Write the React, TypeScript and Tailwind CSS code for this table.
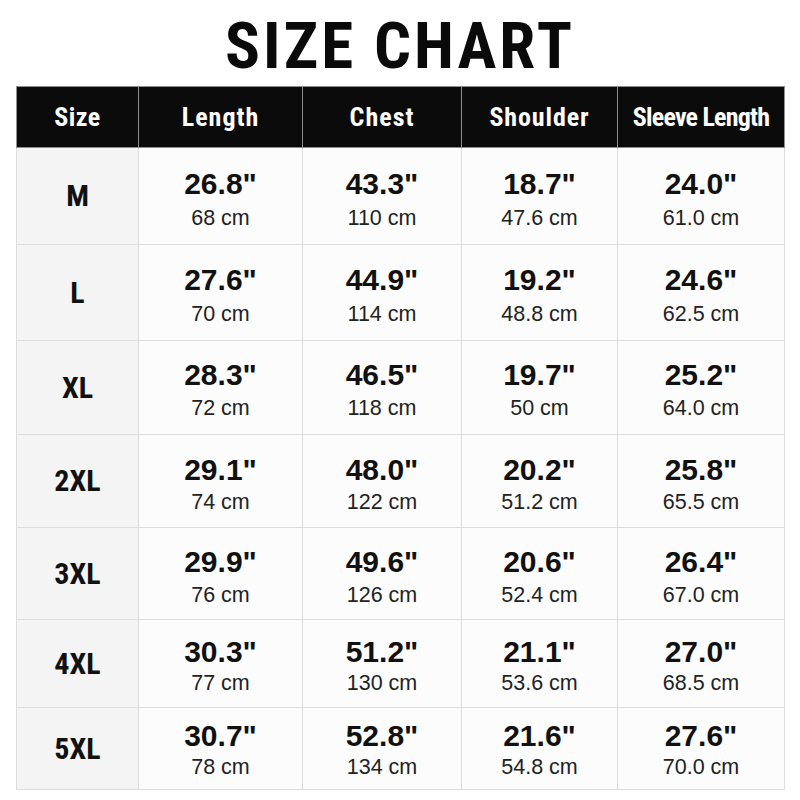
const headers: [string, string][] = [
  ["Size", "tracking-[0.5px]"],
  ["Length", "tracking-[1px]"],
  ["Chest", "tracking-[1px]"],
  ["Shoulder", "tracking-[0.9px]"],
  ["Sleeve Length", "tracking-[-0.8px]"],
];

type Row = {
  size: string;
  h: string;
  pt: string;
  mt: string;
  vals: [string, string][];
};

const rows: Row[] = [
  { size: "M", h: "h-[97px]", pt: "pt-[20px]", mt: "mt-[5px]", vals: [["26.8\"", "68 cm"], ["43.3\"", "110 cm"], ["18.7\"", "47.6 cm"], ["24.0\"", "61.0 cm"]] },
  { size: "L", h: "h-[96px]", pt: "pt-[19px]", mt: "mt-[5px]", vals: [["27.6\"", "70 cm"], ["44.9\"", "114 cm"], ["19.2\"", "48.8 cm"], ["24.6\"", "62.5 cm"]] },
  { size: "XL", h: "h-[94px]", pt: "pt-[18px]", mt: "mt-[4px]", vals: [["28.3\"", "72 cm"], ["46.5\"", "118 cm"], ["19.7\"", "50 cm"], ["25.2\"", "64.0 cm"]] },
  { size: "2XL", h: "h-[93px]", pt: "pt-[19px]", mt: "mt-[3px]", vals: [["29.1\"", "74 cm"], ["48.0\"", "122 cm"], ["20.2\"", "51.2 cm"], ["25.8\"", "65.5 cm"]] },
  { size: "3XL", h: "h-[92px]", pt: "pt-[18px]", mt: "mt-[4px]", vals: [["29.9\"", "76 cm"], ["49.6\"", "126 cm"], ["20.6\"", "52.4 cm"], ["26.4\"", "67.0 cm"]] },
  { size: "4XL", h: "h-[88px]", pt: "pt-[16px]", mt: "mt-[2px]", vals: [["30.3\"", "77 cm"], ["51.2\"", "130 cm"], ["21.1\"", "53.6 cm"], ["27.0\"", "68.5 cm"]] },
  { size: "5XL", h: "h-[82px]", pt: "pt-[12px]", mt: "mt-[2px]", vals: [["30.7\"", "78 cm"], ["52.8\"", "134 cm"], ["21.6\"", "54.8 cm"], ["27.6\"", "70.0 cm"]] },
];

const cond = "font-['Roboto_Condensed',Roboto,'Liberation_Sans',sans-serif]";
const sans = "font-['Liberation_Sans',Arial,sans-serif]";
const grid = "grid grid-cols-[122px_164px_159px_156px_167px]";

export default function App() {
  return (
    <div className="w-[800px] h-[800px] bg-white overflow-hidden">
      <div className="h-[86px] flex items-center justify-center pt-[6px]">
        <h1 className={`${cond} text-[65px] leading-none font-bold tracking-[3px] text-[#0a0a0a]`}>
          SIZE CHART
        </h1>
      </div>
      <div className="ml-[16px] w-[769px] flex flex-col">
        <div className={`${grid} h-[62px] bg-[#0b0b0b] border-l border-t border-[#8e8e8e]`}>
          {headers.map(([t, tr]) => (
            <div
              key={t}
              className={`${cond} ${tr} flex items-center justify-center border-r border-b border-[#8e8e8e] text-white text-[26px] font-bold leading-none`}
            >
              {t}
            </div>
          ))}
        </div>
        {rows.map((r) => (
          <div key={r.size} className={`${grid} ${r.h} border-l border-[#dcdcdc]`}>
            <div
              className={`${cond} flex items-center justify-center bg-[#f4f4f4] border-r border-b border-[#dcdcdc] text-[30px] font-bold leading-none text-[#111]`}
            >
              {r.size}
            </div>
            {r.vals.map(([inch, cm], i) => (
              <div
                key={i}
                className={`${sans} ${r.pt} flex flex-col items-center bg-[#fcfcfc] border-r border-b border-[#dcdcdc]`}
              >
                <div className="text-[30px] leading-[32px] font-bold text-[#111]">{inch}</div>
                <div className={`${r.mt} text-[21.5px] leading-[26px] text-[#222]`}>{cm}</div>
              </div>
            ))}
          </div>
        ))}
      </div>
    </div>
  );
}
